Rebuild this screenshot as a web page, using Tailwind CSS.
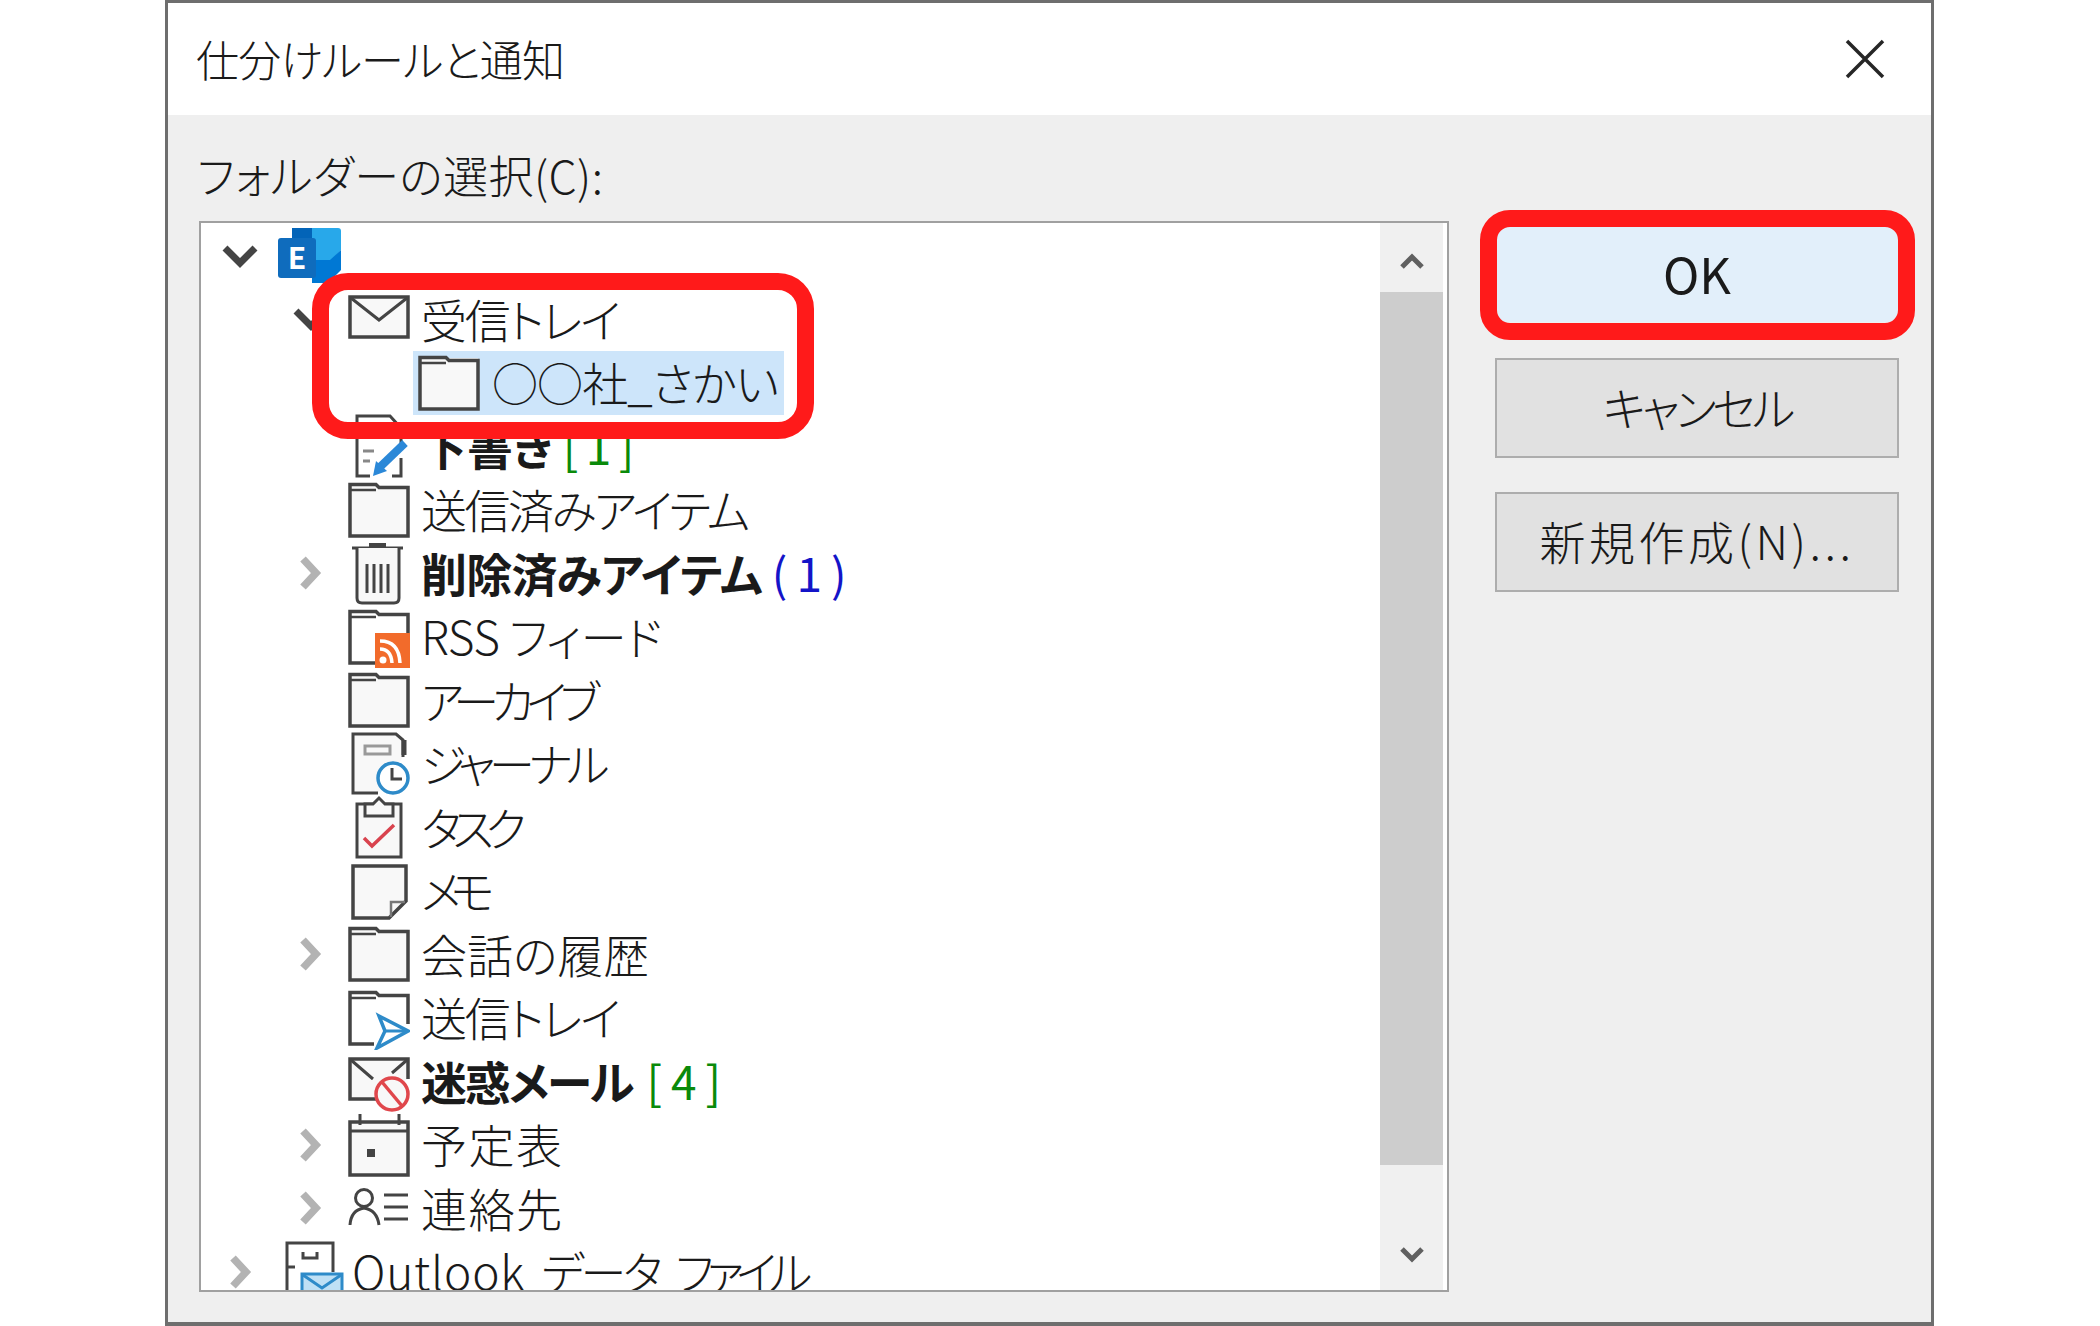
<!DOCTYPE html>
<html lang="ja">
<head>
    <meta charset="UTF-8">
    <title>仕分けルールと通知</title>
    <script src="https://cdn.jsdelivr.net/npm/@tailwindcss/browser@4"></script>
</head>
<body class="bg-white font-['Noto_Sans_CJK_JP','Noto_Sans',sans-serif] font-light [font-feature-settings:'palt'] text-[#1a1a1a] overflow-hidden">
    <!-- shared icons -->
    <svg class="hidden">
        <symbol id="folder" viewBox="0 0 62 64">
            <path d="M2 58V7H60V58Z" fill="#f8f8f8"/>
            <path d="M2 58V6.500H28L31 9.500H60V58Z" fill="none" stroke="#444" stroke-width="3.500"/>
            <path d="M2 12H28" stroke="#444" stroke-width="2.500"/>
        </symbol>
        <symbol id="chev-right" viewBox="0 0 40 40">
            <path d="M12 6L25 20L12 34" fill="none" stroke="#b3b3b3" stroke-width="7.500"/>
        </symbol>
        <symbol id="chev-down" viewBox="0 0 40 40">
            <path d="M5 12L20 27L35 12" fill="none" stroke="#444" stroke-width="7"/>
        </symbol>
    </svg>

    <div class="relative ml-[165px] h-[1326px] w-[1769px] border-[3px] border-b-[4px] border-[#6e6e6e] bg-[#efefef]">
        <!-- title bar -->
        <div class="flex h-[112px] items-center justify-between bg-white pl-[28px] pr-[46px]">
            <h1 class="pb-[2px] text-[43px] leading-none tracking-[-0.7px]">仕分けルールと通知</h1>
            <svg class="h-[40px] w-[40px]" viewBox="0 0 40 40"><path d="M2 2L38 38M38 2L2 38" stroke="#262626" stroke-width="3.500"/></svg>
        </div>

        <div class="pl-[31px]">
            <div class="-ml-[2px] flex h-[106px] items-center pt-[12px] text-[45px] leading-none tracking-[0.4px]">フォルダーの選択(C):</div>

            <div class="flex items-start">
                <!-- folder tree -->
                <div class="flex h-[1071px] w-[1250px] border-2 border-[#a0a0a0] bg-white">
                    <div class="flex-1 overflow-hidden whitespace-nowrap pt-px text-[46px] leading-none [&_span]:pb-[3px]">

                        <div class="flex h-[63.500px] items-center pl-[19px]">
                            <svg class="mr-[18px] h-[40px] w-[40px]"><use href="#chev-down"/></svg>
                            <svg class="h-[64px] w-[64px]" viewBox="0 0 64 64">
                                <path d="M14 4H36V20H14Z" fill="#0364b8"/>
                                <path d="M34 4H60Q63 4 63 7V26L52 38H34Z" fill="#28a8ea"/>
                                <path d="M34 36H52L63 26V46L50 59H34Z" fill="#0078d4"/>
                                <rect x="0" y="14" width="38" height="40" rx="3" fill="#0f6cbd"/>
                                <text x="19" y="45" text-anchor="middle" font-size="30" font-weight="700" fill="#fff">E</text>
                            </svg>
                        </div>

                        <div class="flex h-[63.500px] items-center pl-[90px]">
                            <svg class="mr-[17px] h-[40px] w-[40px]"><use href="#chev-down"/></svg>
                            <svg class="h-[64px] w-[62px]" viewBox="0 0 62 64"><path d="M2 10H60V50H2Z" fill="#f8f8f8" stroke="#444" stroke-width="3.500"/><path d="M3 11L31 33L59 11" fill="none" stroke="#444" stroke-width="3"/></svg>
                            <span class="ml-[11px] tracking-[-2.200px]">受信トレイ</span>
                        </div>

                        <div class="flex h-[63.500px] items-center pl-[212px]">
                            <div class="flex h-full w-[371px] items-center bg-[#cde5fa] pl-[5px]">
                                <svg class="h-[64px] w-[62px]"><use href="#folder"/></svg>
                                <span class="ml-[12px] tracking-[-0.900px]">○○社_さかい</span>
                            </div>
                        </div>

                        <div class="flex h-[63.500px] items-center pl-[147px]">
                            <svg class="h-[64px] w-[62px]" viewBox="0 0 62 64">
                                <path d="M34 2H9V62H22M44 62H53V44M53 30V14L42 2H34" fill="none" stroke="#444" stroke-width="3"/>
                                <path d="M15 37H26M15 47H22" stroke="#888" stroke-width="3"/>
                                <path d="M32 53L57 29" stroke="#2b88d8" stroke-width="8"/>
                                <path d="M25 62L28 47L39 57Z" fill="#2b88d8"/>
                            </svg>
                            <span class="ml-[11px] font-bold">下書き</span><span class="ml-[10px] font-normal tracking-[7.500px] text-[#0a8a0a]">[1]</span>
                        </div>

                        <div class="flex h-[63.500px] items-center pl-[147px]">
                            <svg class="h-[64px] w-[62px]"><use href="#folder"/></svg>
                            <span class="ml-[11px] tracking-[-2.500px]">送信済みアイテム</span>
                        </div>

                        <div class="flex h-[63.500px] items-center pl-[90px]">
                            <svg class="mr-[17px] h-[40px] w-[40px]"><use href="#chev-right"/></svg>
                            <svg class="h-[64px] w-[62px]" viewBox="0 0 62 64">
                                <path d="M4 7H55" stroke="#444" stroke-width="3"/>
                                <path d="M21 6V2H38V6Z" fill="#444"/>
                                <path d="M9 7V57Q9 62 14 62H46Q51 62 51 57V7" fill="#f8f8f8" stroke="#444" stroke-width="3"/>
                                <path d="M19 23V52M26 23V52M33 23V52M40 23V52" stroke="#444" stroke-width="3"/>
                            </svg>
                            <span class="ml-[11px] font-bold tracking-[-0.800px]">削除済みアイテム</span><span class="ml-[10px] font-normal tracking-[9px] text-[#1414c8]">(1)</span>
                        </div>

                        <div class="flex h-[63.500px] items-center pl-[147px]">
                            <svg class="h-[64px] w-[62px]" viewBox="0 0 62 64">
                                <path d="M27 58H2V6.500H28L31 9.500H60V28" fill="none" stroke="#444" stroke-width="3.500"/>
                                <path d="M2 12H28" stroke="#444" stroke-width="2.500"/>
                                <rect x="27" y="28" width="35" height="35" fill="#f26b2b"/>
                                <circle cx="35" cy="55" r="3.500" fill="#fff"/>
                                <path d="M32 44Q43 44 44 58M32 36Q51 36 52 58" fill="none" stroke="#fff" stroke-width="3.500"/>
                            </svg>
                            <span class="ml-[11px] tracking-[-0.500px]">RSS フィード</span>
                        </div>

                        <div class="flex h-[63.500px] items-center pl-[147px]">
                            <svg class="h-[64px] w-[62px]"><use href="#folder"/></svg>
                            <span class="ml-[11px] tracking-[-7.500px]">アーカイブ</span>
                        </div>

                        <div class="flex h-[63.500px] items-center pl-[147px]">
                            <svg class="h-[64px] w-[62px]" viewBox="0 0 62 64">
                                <path d="M30 61H5V2H48L55 8V25" fill="#f8f8f8" stroke="#444" stroke-width="3"/>
                                <rect x="17" y="14" width="25" height="8" fill="none" stroke="#999" stroke-width="3"/>
                                <path d="M56 8V23" stroke="#444" stroke-width="5"/>
                                <circle cx="45" cy="46" r="15" fill="#fff" stroke="#2e8bc9" stroke-width="3.500"/>
                                <path d="M44 36V47H54" fill="none" stroke="#444" stroke-width="3"/>
                            </svg>
                            <span class="ml-[11px] tracking-[-6px]">ジャーナル</span>
                        </div>

                        <div class="flex h-[63.500px] items-center pl-[147px]">
                            <svg class="h-[64px] w-[62px]" viewBox="0 0 62 64">
                                <path d="M9 9H53V62H9Z" fill="#f8f8f8" stroke="#444" stroke-width="3"/>
                                <path d="M17 21V9H25L31 3L37 9H45V21Z" fill="#f8f8f8" stroke="#444" stroke-width="3"/>
                                <path d="M16 43L24 51L46 30" fill="none" stroke="#d9434e" stroke-width="3.500"/>
                            </svg>
                            <span class="ml-[11px] tracking-[-8.700px]">タスク</span>
                        </div>

                        <div class="flex h-[63.500px] items-center pl-[147px]">
                            <svg class="h-[64px] w-[62px]" viewBox="0 0 62 64">
                                <path d="M5 7H58V42L41 59H5Z" fill="#f8f8f8" stroke="#444" stroke-width="3.500"/>
                                <path d="M57 43H43V58" fill="none" stroke="#777" stroke-width="2.500"/>
                            </svg>
                            <span class="ml-[11px] tracking-[-10.500px]">メモ</span>
                        </div>

                        <div class="flex h-[63.500px] items-center pl-[90px]">
                            <svg class="mr-[17px] h-[40px] w-[40px]"><use href="#chev-right"/></svg>
                            <svg class="h-[64px] w-[62px]"><use href="#folder"/></svg>
                            <span class="ml-[11px]">会話の履歴</span>
                        </div>

                        <div class="flex h-[63.500px] items-center pl-[147px]">
                            <svg class="h-[64px] w-[62px]" viewBox="0 0 62 64">
                                <path d="M26 58H2V6.500H28L31 9.500H60V38" fill="none" stroke="#444" stroke-width="3.500"/>
                                <path d="M2 12H28" stroke="#444" stroke-width="2.500"/>
                                <path d="M31 30L60 45L29 62L37 45Z" fill="#fff" stroke="#2e8bc9" stroke-width="3.500"/>
                                <path d="M37 45H60" stroke="#2e8bc9" stroke-width="3"/>
                            </svg>
                            <span class="ml-[11px] tracking-[-2.200px]">送信トレイ</span>
                        </div>

                        <div class="flex h-[63.500px] items-center pl-[147px]">
                            <svg class="h-[64px] w-[62px]" viewBox="0 0 62 64">
                                <path d="M28 50H2V10H60V30" fill="#f8f8f8" stroke="#444" stroke-width="3.500"/>
                                <path d="M3 11L25 30M59 11L44 24" fill="none" stroke="#444" stroke-width="3"/>
                                <circle cx="44" cy="45" r="16" fill="#f8f8f8" stroke="#e0474c" stroke-width="3.500"/>
                                <path d="M34 33L54 57" stroke="#e0474c" stroke-width="3.500"/>
                            </svg>
                            <span class="ml-[11px] font-bold tracking-[-2.200px]">迷惑メール</span><span class="ml-[14px] font-normal tracking-[9px] text-[#0a8a0a]">[4]</span>
                        </div>

                        <div class="flex h-[63.500px] items-center pl-[90px]">
                            <svg class="mr-[17px] h-[40px] w-[40px]"><use href="#chev-right"/></svg>
                            <svg class="h-[64px] w-[62px]" viewBox="0 0 62 64">
                                <path d="M2 9H60V62H2Z" fill="#f8f8f8" stroke="#444" stroke-width="3.500"/>
                                <path d="M2 18H60" stroke="#444" stroke-width="3"/>
                                <path d="M12 1V12M51 1V12" stroke="#444" stroke-width="3"/>
                                <rect x="19" y="36" width="8" height="8" fill="#444"/>
                            </svg>
                            <span class="ml-[11px] tracking-[1.500px]">予定表</span>
                        </div>

                        <div class="flex h-[63.500px] items-center pl-[90px]">
                            <svg class="mr-[17px] h-[40px] w-[40px]"><use href="#chev-right"/></svg>
                            <svg class="h-[64px] w-[62px]" viewBox="0 0 62 64">
                                <circle cx="16" cy="22" r="8.500" fill="none" stroke="#444" stroke-width="3"/>
                                <path d="M2 49Q3 34 16 32Q29 34 31 49" fill="none" stroke="#444" stroke-width="3"/>
                                <path d="M36 19H60M36 31H60M36 43H60" stroke="#444" stroke-width="3"/>
                            </svg>
                            <span class="ml-[11px] tracking-[1.500px]">連絡先</span>
                        </div>

                        <div class="flex h-[63.500px] items-center pl-[20px]">
                            <svg class="mr-[24px] h-[40px] w-[40px]"><use href="#chev-right"/></svg>
                            <svg class="h-[64px] w-[62px]" viewBox="0 0 62 64">
                                <path d="M2 52V3H48V32" fill="none" stroke="#444" stroke-width="3"/>
                                <path d="M18 12V18H32V12" fill="none" stroke="#444" stroke-width="3"/>
                                <path d="M2 27H10" stroke="#444" stroke-width="3"/>
                                <path d="M17 34H57V52H17Z" fill="#bfe0f5" stroke="#2e8bc9" stroke-width="3"/>
                                <path d="M18 35L37 48L56 35" fill="none" stroke="#2e8bc9" stroke-width="3"/>
                            </svg>
                            <span class="ml-[5px] [word-spacing:6px]"><b class="font-light tracking-[0.800px]">Outlook</b> <b class="font-light tracking-[-3.500px]">データ</b> <b class="font-light tracking-[-7.500px]">ファイル</b></span>
                        </div>
                    </div>

                    <!-- scrollbar -->
                    <div class="mr-[4px] flex w-[63px] flex-col bg-[#f0f0f0]">
                        <div class="flex h-[69px] items-center justify-center pt-[6px]">
                            <svg class="h-[18px] w-[24px]" viewBox="0 0 24 18"><path d="M2 15L12 5L22 15" fill="none" stroke="#606060" stroke-width="5"/></svg>
                        </div>
                        <div class="h-[873px] bg-[#cdcdcd]"></div>
                        <div class="flex flex-1 items-end justify-center pb-[26px]">
                            <svg class="h-[18px] w-[24px]" viewBox="0 0 24 18"><path d="M2 3L12 13L22 3" fill="none" stroke="#606060" stroke-width="5"/></svg>
                        </div>
                    </div>
                </div>

                <!-- buttons -->
                <div class="ml-[46px] flex w-[404px] flex-col pt-[5px] text-[46px] leading-none">
                    <button class="h-[96px] bg-[#e2effa] pb-[4px] text-[49px] font-normal">OK</button>
                    <button class="mt-[36px] h-[100px] border-2 border-[#adadad] bg-[#e1e1e1] pb-[4px] tracking-[-4px]">キャンセル</button>
                    <button class="mt-[34px] h-[100px] border-2 border-[#adadad] bg-[#e1e1e1] pb-[4px] tracking-[3.500px]">新規作成(N)...</button>
                </div>
            </div>
        </div>

        <!-- red callouts drawn on top of the dialog -->
        <div class="absolute top-[270px] left-[144px] h-[166px] w-[502px] rounded-[36px] border-[17px] border-[#ff1a1a]"></div>
        <div class="absolute top-[207px] left-[1312px] h-[130px] w-[435px] rounded-[30px] border-[17px] border-[#ff1a1a]"></div>
    </div>
</body>
</html>
